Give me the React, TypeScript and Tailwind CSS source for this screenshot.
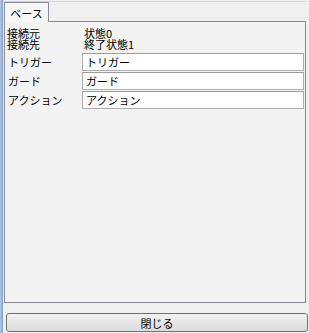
const rows = [
  { label: "トリガー", value: "トリガー" },
  { label: "ガード", value: "ガード" },
  { label: "アクション", value: "アクション" },
];

const App = () => {
  return (
    <div
      className="w-[309px] h-[333px] bg-[#f0f0f0] flex text-[11px] leading-[11px] text-black overflow-hidden"
      style={{ fontFamily: '"MS UI Gothic", "Noto Sans CJK JP", sans-serif' }}
    >
      <div className="w-[3px] h-full bg-gradient-to-r from-[#b9cbe6] to-[#7f9bc6]" />
      <div className="flex-1 flex flex-col">
        <div className="h-[1px] mt-[1px] mr-[2px] bg-[#d5d5d5]" />
        <div className="flex pl-[1px] h-[20px]">
          <div className="w-[45px] h-[20px] bg-[#f7f7f7] border border-b-0 border-[#898c95] flex items-center justify-center pt-[1px] relative z-10">
            ベース
          </div>
        </div>
        <div className="ml-[1px] mr-[3px] -mt-[1px] h-[282px] border border-[#898c95] bg-[#f3f3f3] flex flex-col pt-[6px] pl-[1px] pr-[1px]">
          <div className="flex h-[11px] items-center">
            <div className="w-[77px] pl-[1px]">接続元</div>
            <div className="pl-[1px]">状態0</div>
          </div>
          <div className="flex h-[11px] items-center">
            <div className="w-[77px] pl-[1px]">接続先</div>
            <div className="pl-[1px]">終了状態1</div>
          </div>
          <div className="flex flex-col gap-[1px] mt-[3px]">
            {rows.map((r) => (
              <div key={r.label} className="flex items-center h-[18px]">
                <div className="w-[76px] pl-[2px]">{r.label}</div>
                <div className="flex-1 h-[18px] bg-white border border-[#abadb3] border-t-[#9c9c9c] flex items-center pl-[3px]">
                  {r.value}
                </div>
              </div>
            ))}
          </div>
        </div>
        <div className="mt-[10px] ml-[3px] mr-[1px] h-[19px] rounded-[3px] border border-[#707070] bg-gradient-to-b from-[#f2f2f2] to-[#dcdcdc] flex items-center justify-center pt-[1px]">
          閉じる
        </div>
      </div>
    </div>
  );
};

export default App;
